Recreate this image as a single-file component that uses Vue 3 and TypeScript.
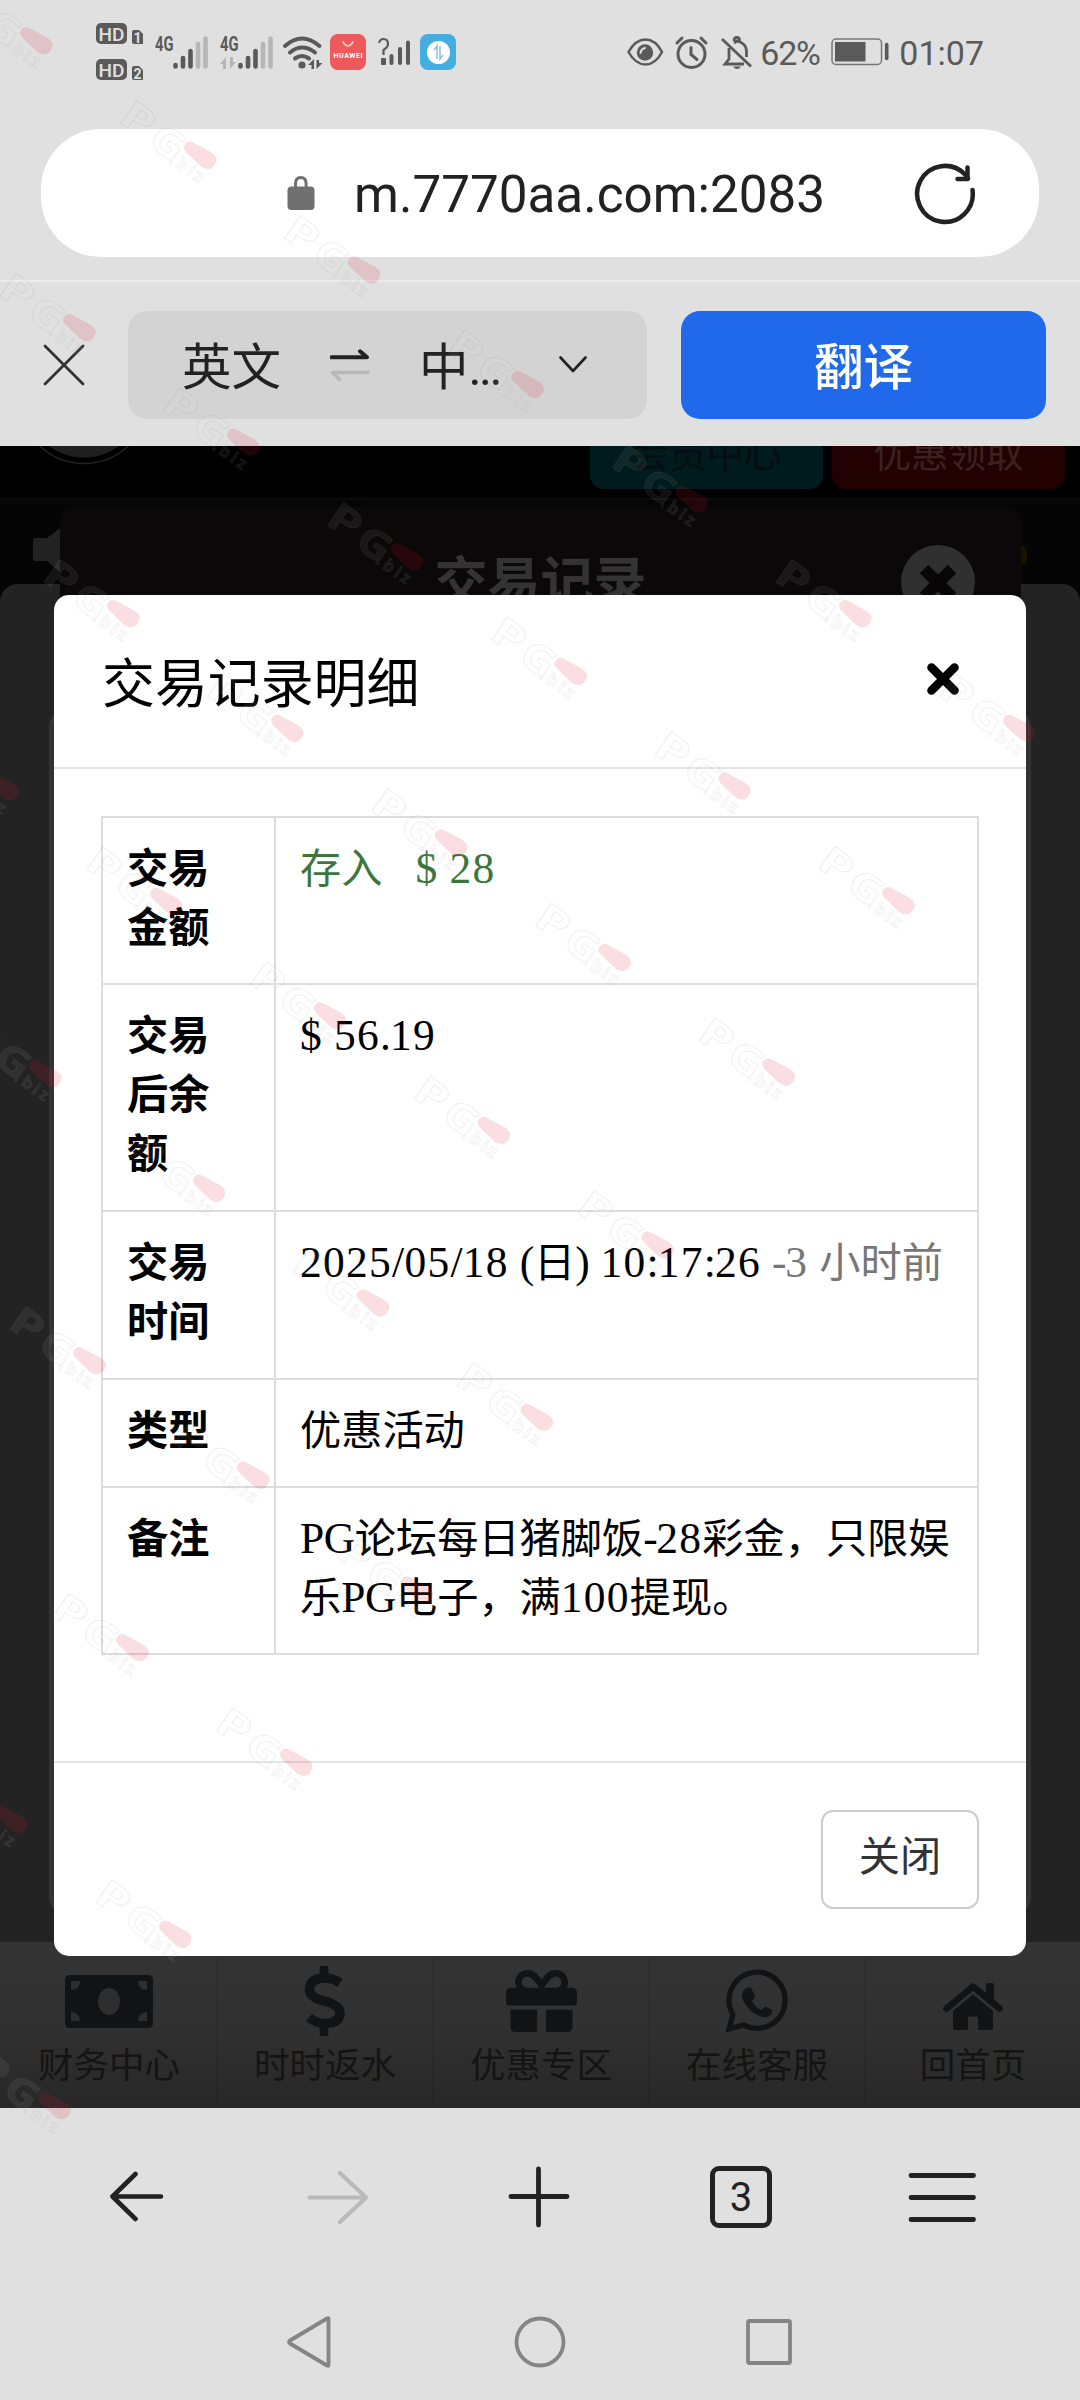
<script setup lang="ts">
interface Mark { x: number; y: number }
interface Chain { x: number; y: number; count: number }

const chains: Chain[] = [
  { x: 36, y: 40, count: 7 },
  { x: 79, y: 327, count: 6 },
  { x: 123, y: 613, count: 5 },
  { x: 2, y: 786, count: 5 },
  { x: 45, y: 1073, count: 4 },
  { x: 89, y: 1360, count: 3 },
  { x: 132, y: 1647, count: 2 },
  { x: 11, y: 1819, count: 2 },
  { x: 54, y: 2105, count: 1 },
]

const marks: Mark[] = chains.flatMap((c) =>
  Array.from({ length: c.count }, (_, i) => ({ x: c.x + i * 163.8, y: c.y + i * 114.6 })),
)
</script>

<template>
  <div class="screen">
    <header class="status">
      <svg class="ic-hd" width="48" height="58" viewBox="96 24 48 58">
        <g fill="#5a5a5a">
          <rect x="96" y="24" width="31" height="21" rx="5" />
          <rect x="96" y="60" width="31" height="21" rx="5" />
          <path d="M132 33q0-2 2-2h5l4 4v10h-9q-2 0-2-2zM132 69q0-2 2-2h5l4 4v10h-9q-2 0-2-2z" />
        </g>
        <g fill="#e0e0e0" font-family="Roboto, sans-serif" font-weight="500" text-anchor="middle">
          <text x="111.5" y="41.5" font-size="19" textLength="26" lengthAdjust="spacingAndGlyphs">HD</text>
          <text x="111.5" y="77.500" font-size="19" textLength="26" lengthAdjust="spacingAndGlyphs">HD</text>
          <text x="137.500" y="43.500" font-size="14" font-weight="700">1</text>
          <text x="137.500" y="79.500" font-size="14" font-weight="700">2</text>
        </g>
      </svg>
      <svg class="ic-sig1" width="54" height="34" viewBox="155 36 54 34">
        <text x="155" y="51" font-size="21" font-weight="700" font-family="Roboto, sans-serif" fill="#5a5a5a" textLength="18.500" lengthAdjust="spacingAndGlyphs">4G</text>
        <g stroke-width="4.600" stroke-linecap="round">
          <path d="M175.500 65v1.500M183 58v8.500M190.500 51v15.500" stroke="#5a5a5a" />
          <path d="M198 44v22.500M205.500 38.500v28" stroke="#b6b6b6" />
        </g>
      </svg>
      <svg class="ic-sig2" width="54" height="34" viewBox="220 36 54 34">
        <text x="220" y="51" font-size="21" font-weight="700" font-family="Roboto, sans-serif" fill="#5a5a5a" textLength="18.500" lengthAdjust="spacingAndGlyphs">4G</text>
        <path d="M220 64l6-7v12h-3v-5zM236 62l-6 7v-12h3v5z" fill="#b6b6b6" />
        <g stroke-width="4.600" stroke-linecap="round">
          <path d="M240.500 65v1.500M248 58v8.500M255.500 51v15.500" stroke="#5a5a5a" />
          <path d="M263 44v22.500M270.500 38.500v28" stroke="#b6b6b6" />
        </g>
      </svg>
      <svg class="ic-wifi" width="40" height="34" viewBox="283 36 40 34">
        <g fill="none" stroke="#5a5a5a" stroke-width="4" stroke-linecap="round">
          <path d="M285 46q17-15 34.500 0M290 52.500q12-10 25 0M295 58.500q7-5 14 0" />
        </g>
        <circle cx="302" cy="65" r="3.600" fill="#5a5a5a" />
        <path d="M308 65l6-6v10h-2.500v-4zM322.500 63l-6 6v-9h2.500v3z" fill="#5a5a5a" />
      </svg>
      <svg class="ic-hw" width="36" height="36" viewBox="0 0 36 36">
        <rect width="36" height="36" rx="8" fill="#ee5a5c" />
        <path d="M13 8q5 8 10 0" fill="none" stroke="#fbd0cc" stroke-width="1.500" stroke-linecap="round" />
        <text x="18" y="24" font-size="7" font-weight="700" font-family="Roboto, sans-serif" fill="#fff" text-anchor="middle" textLength="29">HUAWEI</text>
      </svg>
      <svg class="ic-noq" width="34" height="32" viewBox="377 36 34 32">
        <path d="M379 43q1-4 4.500-4 4.500 0 4.500 5 0 3-4.500 6v5" fill="none" stroke="#5a5a5a" stroke-width="2.200" />
        <rect x="381" y="58" width="5" height="7" rx="1" fill="#5a5a5a" />
        <path d="M391.500 56v7M400 49v14M408 42.500v20.500" stroke="#5a5a5a" stroke-width="4" stroke-linecap="round" />
      </svg>
      <svg class="ic-blue" width="36" height="36" viewBox="0 0 36 36">
        <rect width="36" height="36" rx="8" fill="#45aee0" />
        <circle cx="18.500" cy="18.500" r="11.500" fill="#fff" />
        <path d="M14 16l3-4v13M20 12v13l3-4" fill="none" stroke="#8cc4e0" stroke-width="1.500" />
      </svg>
      <span class="grow"></span>
      <svg class="ic-eye" width="36" height="30" viewBox="628 37 36 30">
        <path d="M629.500 52q7-12.500 17-12.500t16.500 12.500q-6.500 12.500-16.500 12.500t-17-12.500z" fill="none" stroke="#5a5a5a" stroke-width="2.500" />
        <circle cx="646" cy="52.500" r="8.200" fill="#5a5a5a" />
        <path d="M641.500 53q.5-4 4.500-5" fill="none" stroke="#e0e0e0" stroke-width="2" stroke-linecap="round" />
      </svg>
      <svg class="ic-alarm" width="34" height="34" viewBox="676 36 34 34">
        <g fill="none" stroke="#5a5a5a" stroke-linecap="round">
          <circle cx="692.500" cy="54" r="13.500" stroke-width="3" />
          <path d="M692 47.500v7l6 5M678 43l5-5M707 43l-5-5" stroke-width="3" />
        </g>
      </svg>
      <svg class="ic-bell" width="32" height="34" viewBox="721 36 32 34">
        <g fill="none" stroke="#5a5a5a" stroke-width="2.800">
          <path d="M730 48v11l-4 5h19M735 43l3-2q9 2 9.500 10v6M735 41q0-3.500 2.800-3.500t2.800 3.500" />
          <path d="M723 39l29 27.500" />
        </g>
        <path d="M734 66.500h8q-4 5-8 0z" fill="#5a5a5a" />
      </svg>
      <span class="st-text pct">62%</span>
      <svg class="ic-bat" width="58" height="28" viewBox="832 39 58 28">
        <rect x="833" y="40" width="49.500" height="25.500" rx="4" fill="none" stroke="#777" stroke-width="1.500" />
        <rect x="836" y="43" width="30.500" height="19.500" fill="#5a5a5a" />
        <path d="M887.700 45.500v14" stroke="#5a5a5a" stroke-width="3.600" stroke-linecap="round" />
      </svg>
      <span class="st-text">01:07</span>
    </header>

    <div class="urlrow">
      <div class="urlbar">
        <svg class="lock" width="28" height="36" viewBox="0 0 28 36">
          <path d="M8.500 14V8.500q0-6 5.300-6t5.300 6V14" fill="none" stroke="#707070" stroke-width="3" />
          <rect x=".5" y="11.500" width="27" height="23.500" rx="4" fill="#707070" />
        </svg>
        <span class="url">m.7770aa.com:2083</span>
        <svg class="reload" width="62" height="62" viewBox="914 162 62 62">
          <g fill="none" stroke="#222" stroke-width="4.500" stroke-linecap="round" stroke-linejoin="round">
            <path d="M972.500 189a27.800 28 0 1 1-7.500-15.500l3 4" />
            <path d="M967.500 166.500v11.500h-10" />
          </g>
        </svg>
      </div>
    </div>

    <div class="translate">
      <svg class="tclose" width="42" height="42" viewBox="0 0 42 42">
        <path d="M2 2l38 38M40 2L2 40" stroke="#333" stroke-width="2.800" stroke-linecap="round" />
      </svg>
      <div class="langs">
        <span class="lang from">英文</span>
        <svg class="swap" width="40" height="34" viewBox="330 347 40 34">
          <path d="M331.500 356.300h35.500l-7-6" fill="none" stroke="#222" stroke-width="4" stroke-linecap="round" stroke-linejoin="round" />
          <path d="M368 371.500h-35.500l7 7" fill="none" stroke="#b8b8b8" stroke-width="3.400" stroke-linecap="round" stroke-linejoin="round" />
        </svg>
        <span class="lang to">中<span class="dots">...</span></span>
        <svg class="chev" width="28" height="18" viewBox="0 0 28 18">
          <path d="M1.500 1.500L14 15 26.500 1.500" fill="none" stroke="#222" stroke-width="2.600" stroke-linecap="round" stroke-linejoin="round" />
        </svg>
      </div>
      <button class="go">翻译</button>
    </div>

    <main class="page">
      <div class="topbar">
        <svg class="avatar" width="140" height="24" viewBox="14 446 140 24">
          <circle cx="84" cy="399" r="64.500" fill="#000" stroke="#222" stroke-width="1.500" />
          <circle cx="84" cy="398" r="59.500" fill="#1f1f1f" />
        </svg>
        <div class="pill teal">会员中心</div>
        <div class="pill red">优惠领取</div>
      </div>
      <div class="backdrop-area">
        <svg class="speaker" width="27" height="44" viewBox="0 0 27 44">
          <path d="M0 12q0-2 2-2h12l13-10v44L14 33H2q-2 0-2-2z" fill="#222" />
        </svg>
        <div class="sheet">
          <div class="panel"></div>
        </div>
        <div class="records">
          <h2>交易记录</h2>
          <svg class="rclose" width="74" height="74" viewBox="0 0 74 74">
            <circle cx="37" cy="37" r="37" fill="#303030" />
            <path d="M23 24l28 28M51 24L23 52" stroke="#080606" stroke-width="12" />
          </svg>
        </div>
        <span class="spark"></span>
      </div>
      <nav class="tabs">
        <a class="tab">
          <svg width="88" height="72" viewBox="64 1965 88 72">
            <rect x="64" y="1975" width="88" height="53" rx="4.500" fill="#121315" />
            <g fill="#2e2e2f">
              <ellipse cx="108" cy="2001.500" rx="11" ry="13.500" />
              <path d="M70 1981h9q0 9-9 9zM146 1981h-9q0 9 9 9zM70 2021h9q0-8-9-9zM146 2021h-9q0-8 9-9z" />
            </g>
          </svg>
          <span>财务中心</span>
        </a>
        <a class="tab">
          <svg width="42" height="72" viewBox="304 1965 42 72">
            <g fill="none" stroke="#121315">
              <path d="M324 1966v12M324 2024v12" stroke-width="8.500" />
              <path d="M340 1983q-7-5-15-5-15 0-15.500 11.500 0 8 15 11.500 15.500 4 15.500 12 0 10-15 10.500-9 0-16-6" stroke-width="9.500" />
            </g>
          </svg>
          <span>时时返水</span>
        </a>
        <a class="tab">
          <svg width="71" height="72" viewBox="0 -4 512 520">
            <path fill="#121315" d="M32 448c0 17.700 14.300 32 32 32h160V320H32v128zm256 32h160c17.700 0 32-14.300 32-32V320H288v160zm192-320h-42.100c6.200-12.100 10.100-25.500 10.100-40 0-48.500-39.500-88-88-88-41.600 0-68.500 21.300-103 68.300-34.500-47-61.400-68.300-103-68.300-48.500 0-88 39.500-88 88 0 14.500 3.800 27.900 10.100 40H32c-17.700 0-32 14.300-32 32v80c0 8.800 7.200 16 16 16h480c8.800 0 16-7.200 16-16v-80c0-17.700-14.300-32-32-32zm-326.100 0c-22.100 0-40-17.900-40-40s17.900-40 40-40c19.900 0 34.600 3.300 86.100 80h-86.100zm206.100 0h-86.100c51.400-76.500 65.700-80 86.100-80 22.100 0 40 17.900 40 40s-17.900 40-40 40z" />
          </svg>
          <span>优惠专区</span>
        </a>
        <a class="tab">
          <svg width="64" height="72" viewBox="724 1965 64 72">
            <path d="M728 2029l4-14.500a28 28 0 1 1 11 10.500z" fill="none" stroke="#121315" stroke-width="5.200" />
            <path d="M746 1988q-6 3-5 9 2 8 10 14.500 8 6 14 5.500 6-1 6.500-6.500l-7-4-4 3.500q-6-2-9.500-9l3-4-3.500-8.500q-2-2-4.500-.5z" fill="#121315" />
          </svg>
          <span>在线客服</span>
        </a>
        <a class="tab">
          <svg width="62" height="72" viewBox="941 1965 62 72">
            <path d="M945.500 2008.500l26.500-22 26.500 22" fill="none" stroke="#121315" stroke-width="6.500" stroke-linecap="round" stroke-linejoin="round" />
            <path d="M985 1985q0-2 2-2h4q2 0 2 2v17l-8-7zM952 2011l20-16.500 20 16.500v17q0 2-2 2h-13v-12q0-1.500-1.500-1.500h-7q-1.500 0-1.500 1.500v12h-13q-2 0-2-2z" fill="#121315" />
          </svg>
          <span>回首页</span>
        </a>
      </nav>

      <section class="modal">
        <div class="mhead">
          <h3>交易记录明细</h3>
          <svg width="34" height="34" viewBox="0 0 34 34">
            <path d="M5.500 5.500l23 23M28.500 5.500l-23 23" stroke="#000" stroke-width="8.600" stroke-linecap="round" />
          </svg>
        </div>
        <div class="mbody">
          <table>
            <tbody>
              <tr class="r2"><th>交易金额</th><td class="green">存入<i class="sp"></i><b class="lt">$ 28</b></td></tr>
              <tr class="r3"><th>交易后余额</th><td><b class="lt">$ 56<i class="colon">.</i>19</b></td></tr>
              <tr class="r2"><th>交易时间</th><td><b class="lt">2025<i class="slash">/</i>05<i class="slash">/</i>18 <i class="paren">(</i></b>日<b class="lt"><i class="paren">)</i> 10<i class="colon">:</i>17<i class="colon">:</i>26 </b><span class="ago"><b class="lt"><i class="dash">-</i>3 </b>小时前</span></td></tr>
              <tr class="r1"><th>类型</th><td>优惠活动</td></tr>
              <tr class="r2"><th>备注</th><td><b class="lt pg">PG</b>论坛每日猪脚饭<b class="lt"><i class="dash">-</i>28</b>彩金，只限娱<br />乐<b class="lt pg">PG</b>电子，满<b class="lt">100</b>提现。</td></tr>
            </tbody>
          </table>
        </div>
        <div class="mfoot"><button class="close">关闭</button></div>
      </section>
    </main>

    <footer class="browser">
      <div class="bnav">
        <svg width="54" height="62" viewBox="110 2166 54 62">
          <path d="M161 2196.500h-48M135.500 2174l-23 22.500 23 22.500" fill="none" stroke="#222" stroke-width="4.600" stroke-linecap="round" stroke-linejoin="round" />
        </svg>
        <svg width="62" height="62" viewBox="307 2166 62 62">
          <path d="M309.500 2197.500h56M340 2173l26 24.500-26 24.500" fill="none" stroke="#b9b9b9" stroke-width="4.200" stroke-linecap="round" stroke-linejoin="round" />
        </svg>
        <svg width="62" height="62" viewBox="508 2166 62 62">
          <path d="M511 2196.500h56M538.500 2169v56" fill="none" stroke="#222" stroke-width="4.800" stroke-linecap="round" />
        </svg>
        <div class="count">3</div>
        <svg width="68" height="62" viewBox="908 2166 68 62">
          <path d="M911 2175.500h62.500M911 2197.500h62.500M911 2219.500h62.500" stroke="#222" stroke-width="4.800" stroke-linecap="round" />
        </svg>
      </div>
      <div class="anav">
        <svg width="54" height="54" viewBox="283 2315 54 54">
          <path d="M328.500 2319v46q0 1.500-1.500.5l-37-22q-2-1.500 0-3l37-22q1.500-1 1.500.5z" fill="none" stroke="#858585" stroke-width="3.800" stroke-linejoin="round" />
        </svg>
        <svg width="54" height="54" viewBox="0 0 54 54">
          <circle cx="27" cy="27" r="23.500" fill="none" stroke="#858585" stroke-width="3.800" />
        </svg>
        <svg width="54" height="54" viewBox="0 0 54 54">
          <rect x="6" y="6" width="42" height="42" rx="1.500" fill="none" stroke="#858585" stroke-width="3.800" />
        </svg>
      </div>
    </footer>

    <svg class="marks" width="1080" height="2400" viewBox="0 0 1080 2400" aria-hidden="true">
      <g v-for="(m, i) in marks" :key="i" :transform="`translate(${m.x} ${m.y}) rotate(35)`">
        <g class="mk">
          <text x="-87" y="20" font-size="39" textLength="33" lengthAdjust="spacingAndGlyphs">P</text>
          <text x="-50" y="22" font-size="39" textLength="34" lengthAdjust="spacingAndGlyphs">G</text>
          <text x="-22" y="24" font-size="17" textLength="38">.biz</text>
        </g>
        <path d="M-13-6Q-18-5-18 0T-12 6L7 9Q18 9 18 0T8-8.500z" fill="#dc1432" fill-opacity=".14" />
      </g>
    </svg>
  </div>
</template>

<style>
body { margin: 0; background: #e0e0e0; }
</style>

<style scoped>
.screen {
  position: relative;
  width: 1080px;
  height: 2400px;
  overflow: hidden;
  display: flex;
  flex-direction: column;
  background: #e0e0e0;
  font-family: Roboto, "Noto Sans CJK SC", sans-serif;
}
svg { display: block; flex: none; }
button { font-family: inherit; padding: 0; }

.status {
  height: 129px;
  box-sizing: border-box;
  padding: 0 96px 25px 96px;
  display: flex;
  align-items: center;
}
.status svg { overflow: visible; }
.grow { flex: 1; }
.ic-hd { margin-right: 11px; }
.ic-sig1 { margin-right: 11px; margin-top: 1px; }
.ic-sig2 { margin-right: 9px; margin-top: 1px; }
.ic-wifi { margin-right: 7px; margin-top: 1px; }
.ic-hw { margin-right: 11px; }
.ic-noq { margin-right: 9px; }
.ic-eye { margin-right: 12px; }
.ic-alarm { margin-right: 11px; margin-top: 1px; }
.ic-bell { margin-right: 8px; margin-top: 1px; }
.st-text { font-size: 34px; line-height: 40px; color: #5a5a5a; margin-top: 2px; }
.pct { width: 62px; margin-right: 9px; white-space: nowrap; letter-spacing: -1.300px; }
.ic-bat { margin-right: 10px; }

.urlrow { height: 153px; padding: 0 41px; border-bottom: 2px solid #ececec; box-sizing: border-box; }
.urlbar {
  height: 128px;
  box-sizing: border-box;
  border-radius: 60px;
  background: #fff;
  display: flex;
  align-items: center;
  padding: 1px 63px 0 246px;
}
.lock { margin-right: 39px; margin-top: -1px; }
.url { flex: 1; font-size: 51.200px; line-height: 60px; color: #222; white-space: nowrap; padding-top: 3px; }

.translate {
  height: 164px;
  box-sizing: border-box;
  padding: 29px 34px 27px 43px;
  display: flex;
  align-items: center;
}
.tclose { margin-right: 43px; }
.langs {
  width: 519px;
  height: 108px;
  box-sizing: border-box;
  border-radius: 19px;
  background: #d3d3d3;
  display: flex;
  align-items: center;
  padding-left: 54px;
  color: #222;
}
.lang { font-size: 49.500px; line-height: 60px; white-space: nowrap; padding-top: 6px; }
.from { width: 99px; margin-right: 49px; }
.to { width: 86px; margin-right: 54px; margin-left: 49px; display: flex; }
.dots { letter-spacing: -2.500px; }
.go {
  width: 365px;
  height: 108px;
  margin-left: auto;
  border: 0;
  border-radius: 19px;
  background: #2169eb;
  color: #fff;
  font-size: 49.500px;
  font-weight: 500;
  padding-bottom: 3px;
}

.page { position: relative; height: 1662px; background: #050505; display: flex; flex-direction: column; }
.topbar {
  height: 54px;
  background: #000;
  border-bottom: 2px solid #0b0b0b;
  box-sizing: border-box;
  display: flex;
  align-items: flex-start;
  gap: 9px;
  padding: 0 15px 0 14px;
  overflow: hidden;
}
.avatar { margin-right: auto; }
.pill {
  width: 233px;
  height: 72px;
  margin-top: -29px;
  border-radius: 14px;
  text-align: center;
  font-size: 37.500px;
  line-height: 74px;
}
.teal { background: #001b1d; color: #060d0e; }
.red { background: #230001; color: #3b2222; }

.backdrop-area { position: relative; height: 1442px; display: flex; flex-direction: column; overflow: hidden; }
.speaker { margin: 28px 0 12px 33px; }
.sheet { flex: 1; background: #232323; border-radius: 18px 18px 0 0; padding: 128px 49px 30px; display: flex; }
.panel { flex: 1; background: #333; border-radius: 14px; }
.records {
  position: absolute;
  left: 60px;
  top: 7px;
  width: 961px;
  height: 100px;
  border-radius: 14px 14px 0 0;
  background: #0a0808;
}
.records h2 {
  margin: 38px 0 0;
  text-align: center;
  font-size: 53px;
  line-height: 76px;
  font-weight: 700;
  color: #333;
}
.rclose { position: absolute; right: 46px; top: 38px; }
.spark { position: absolute; left: 1021px; top: 46px; width: 6px; height: 19px; background: #1a1200; border-radius: 0 6px 6px 0; }

.tabs { flex: 1; display: flex; background: linear-gradient(#343434, #303030 55%, #272727); }
.tab {
  flex: 1;
  display: flex;
  flex-direction: column;
  align-items: center;
  padding-top: 23px;
  box-sizing: border-box;
  color: #141414;
  font-size: 35.500px;
  line-height: 50px;
  border-left: 2px solid rgba(0, 0, 0, .08);
}
.tab:first-child { border-left-color: transparent; }
.tab span { margin-top: 4px; }

.modal {
  position: absolute;
  left: 54px;
  top: 149px;
  width: 972px;
  height: 1361px;
  border-radius: 15px;
  background: #fff;
  display: flex;
  flex-direction: column;
}
.mhead {
  height: 174px;
  box-sizing: border-box;
  border-bottom: 2px solid #e4e4e4;
  display: flex;
  align-items: center;
  justify-content: space-between;
  padding: 0 66px 5px 48px;
}
.mhead h3 { margin: 12px 0 0; font-size: 52.900px; line-height: 76px; font-weight: 400; color: #000; }
.mbody { flex: 1; padding: 47px 47px 0; }
table {
  width: 878px;
  border-collapse: collapse;
  table-layout: fixed;
  font-family: "Noto Sans CJK SC", sans-serif;
  font-size: 41.200px;
  line-height: 59px;
  color: #000;
}
th, td { border: 2px solid #ddd; padding: 18px 24px; vertical-align: top; text-align: left; box-sizing: border-box; }
th { width: 173px; font-weight: 700; padding-right: 30px; }
td { white-space: nowrap; }
.r1 { height: 108px; }
.r2 { height: 167.300px; }
.r3 { height: 227px; }
.lt {
  font-family: "Liberation Serif", serif;
  font-weight: 400;
  font-size: 43.500px;
  line-height: 1;
  letter-spacing: 1.250px;
  word-spacing: -1.100px;
  white-space: pre;
}
.lt i { font-style: normal; }
.slash { letter-spacing: .3px; }
.colon { letter-spacing: -.8px; }
.paren { letter-spacing: -.3px; }
.dash { letter-spacing: -1.300px; }
.pg { letter-spacing: -.4px; }
.green { color: #3c763d; }
.sp { display: inline-block; width: 33px; }
.ago { color: #777; }
.mfoot {
  height: 195px;
  box-sizing: border-box;
  border-top: 2px solid #e4e4e4;
  padding: 47px 47px 0;
  display: flex;
  justify-content: flex-end;
}
.close {
  width: 158px;
  height: 99px;
  box-sizing: border-box;
  border: 2px solid #ccc;
  border-radius: 12px;
  background: #fff;
  color: #333;
  font-size: 41.200px;
  line-height: 60px;
  padding-bottom: 5px;
}

.browser { flex: 1; background: #e0e0e0; }
.bnav { display: flex; align-items: center; gap: 139px; padding: 58px 0 0 110px; height: 62px; }
.bnav > :first-child { margin-right: 4px; }
.bnav > :last-child { margin-left: -3px; }
.count {
  width: 62px;
  height: 62px;
  margin-left: 1px;
  box-sizing: border-box;
  border: 5px solid #222;
  border-radius: 9px;
  text-align: center;
  font-size: 40px;
  line-height: 53px;
  color: #222;
}
.anav { display: flex; gap: 175.500px; padding: 87px 0 0 283px; }

.marks { position: absolute; left: 0; top: 0; pointer-events: none; }
.mk {
  font-family: "Open Sans", "Noto Sans", sans-serif;
  font-weight: 700;
  fill: #fff;
  fill-opacity: .07;
  stroke: #808080;
  stroke-opacity: .13;
  stroke-width: 1px;
}
</style>
